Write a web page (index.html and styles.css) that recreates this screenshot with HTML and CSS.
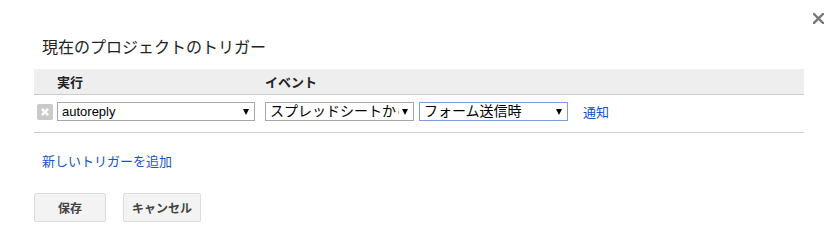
FILE: index.html
```html
<!DOCTYPE html>
<html lang="ja">
<head>
    <meta charset="UTF-8">
    <meta name="viewport" content="width=device-width, initial-scale=1.0">
    <title>現在のプロジェクトのトリガー</title>
    <link rel="stylesheet" href="styles.css">
</head>
<body>
    <div class="dialog">
        <button class="close" title="閉じる">
            <svg width="11" height="11" viewBox="0 0 11 11">
                <path d="M1 1 L10 10 M10 1 L1 10" stroke="#777" stroke-width="2.4" stroke-linecap="square"/>
            </svg>
        </button>

        <h1 class="title">現在のプロジェクトのトリガー</h1>

        <div class="trigger-table">
            <div class="table-head">
                <div class="col-run">実行</div>
                <div class="col-event">イベント</div>
            </div>
            <div class="trigger-row">
                <span class="remove">
                    <svg width="16" height="16" viewBox="0 0 16 16">
                        <rect width="16" height="16" rx="2" fill="#c9c9c9"/>
                        <path d="M4.8 4.8 L11.2 11.2 M11.2 4.8 L4.8 11.2" stroke="#fff" stroke-width="2.4"/>
                    </svg>
                </span>
                <div class="select select-func">
                    <span class="select-text">autoreply</span>
                    <span class="arrow"></span>
                </div>
                <div class="select select-source">
                    <span class="select-text">スプレッドシートから</span>
                    <span class="arrow"></span>
                </div>
                <div class="select select-type focused">
                    <span class="select-text">フォーム送信時</span>
                    <span class="arrow"></span>
                </div>
                <a class="link notify" href="#">通知</a>
            </div>
        </div>

        <a class="link add-trigger" href="#">新しいトリガーを追加</a>

        <div class="buttons">
            <button class="btn">保存</button>
            <button class="btn">キャンセル</button>
        </div>
    </div>
</body>
</html>
```

FILE: styles.css
```css
body {
    margin: 0;
    font-family: "Liberation Sans", Arial, "Noto Sans CJK JP", sans-serif;
    color: #222;
    background: #fff;
}
.dialog {
    position: relative;
    width: 770px;
    padding: 38px 0 0 34px;
}
.close {
    position: absolute;
    top: 13px;
    right: -20px;
    width: 11px;
    height: 11px;
    padding: 0;
    border: none;
    background: none;
    cursor: pointer;
    display: flex;
}
.title {
    margin: 0 0 11px 8px;
    font-size: 16px;
    font-weight: normal;
    line-height: 20px;
}
.table-head {
    display: flex;
    height: 25px;
    align-items: center;
    background: #eee;
    border-bottom: 1px solid #ccc;
    font-size: 13px;
    font-weight: bold;
}
.col-run {
    width: 208px;
    padding-left: 23px;
}
.trigger-row {
    display: flex;
    align-items: center;
    padding: 7px 0 11px 3px;
    border-bottom: 1px solid #ccc;
    font-size: 13px;
}
.remove {
    display: flex;
    flex-shrink: 0;
    margin-right: 4px;
}
.remove svg {
    display: block;
}
.select {
    display: flex;
    flex-shrink: 0;
    align-items: center;
    height: 17px;
    border: 1px solid #a6a6a6;
    background: #fff;
    padding: 0 4px;
    color: #000;
}
.select-text {
    flex: 1;
    overflow: hidden;
    white-space: nowrap;
    line-height: 17px;
}
.select-func {
    width: 188px;
    font-size: 13px;
}
.select-source {
    width: 139px;
    margin-left: 10px;
    font-size: 14px;
}
.select-source .select-text {
    margin-right: 3px;
}
.select-type {
    width: 139px;
    margin-left: 5px;
    font-size: 14px;
}
.select.focused {
    border-color: #7a9ee6;
}
.arrow {
    width: 0;
    height: 0;
    margin-right: 1px;
    border-left: 3.5px solid transparent;
    border-right: 3.5px solid transparent;
    border-top: 6px solid #000;
}
.link {
    color: #15c;
    text-decoration: none;
    font-size: 13px;
}
.link:hover {
    text-decoration: underline;
}
.notify {
    margin-left: 15px;
}
.add-trigger {
    display: inline-block;
    margin: 21px 0 0 8px;
    line-height: 16px;
}
.buttons {
    display: flex;
    gap: 17px;
    margin-top: 23px;
}
.btn {
    min-width: 72px;
    height: 29px;
    padding: 0 8px;
    border: 1px solid #dcdcdc;
    border-radius: 2px;
    background: #f3f3f3;
    color: #444;
    font-family: inherit;
    font-size: 12px;
    font-weight: bold;
    cursor: pointer;
}
.btn:hover {
    border-color: #c6c6c6;
    background: #f8f8f8;
}
```
